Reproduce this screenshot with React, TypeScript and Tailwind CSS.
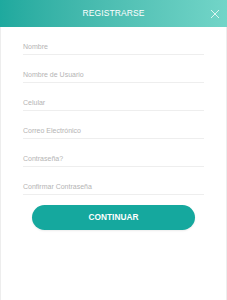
const fields = [
  "Nombre",
  "Nombre de Usuario",
  "Celular",
  "Correo Electrónico",
  "Contraseña?",
  "Confirmar Contraseña",
];

export default function App() {
  return (
    <div className="h-[300px] w-[227px] bg-white font-['Liberation_Sans',Arial,sans-serif]">
      <header className="relative flex h-[27px] items-center justify-center bg-gradient-to-r from-[#1ea99e] to-[#72d5c8]">
        <h1 className="text-[8.5px] leading-none tracking-[0.1px] text-white">REGISTRARSE</h1>
        <button className="absolute right-[7px] top-[8px] flex h-[11px] w-[11px] items-center justify-center">
          <svg width="10" height="10" viewBox="0 0 10 10" fill="none">
            <path d="M1 1L9 9M9 1L1 9" stroke="white" strokeOpacity="0.85" strokeWidth="0.9" />
          </svg>
        </button>
      </header>
      <div className="flex h-[273px] flex-col border-x border-[#ededed]">
        <div className="mx-[22px] flex flex-col">
          {fields.map((label) => (
            <div key={label} className="flex h-[28px] items-end border-b border-[#eeeeee]">
              <span className="pb-[2px] text-[7px] leading-[10px] text-[#b4b4b4]">{label}</span>
            </div>
          ))}
        </div>
        <div className="mt-[10px] flex justify-center">
          <button className="h-[25px] w-[163px] rounded-full bg-[#15a89e] text-[8.3px] font-bold text-white shadow-[0_1px_2px_rgba(0,0,0,0.08)]">
            CONTINUAR
          </button>
        </div>
      </div>
    </div>
  );
}
